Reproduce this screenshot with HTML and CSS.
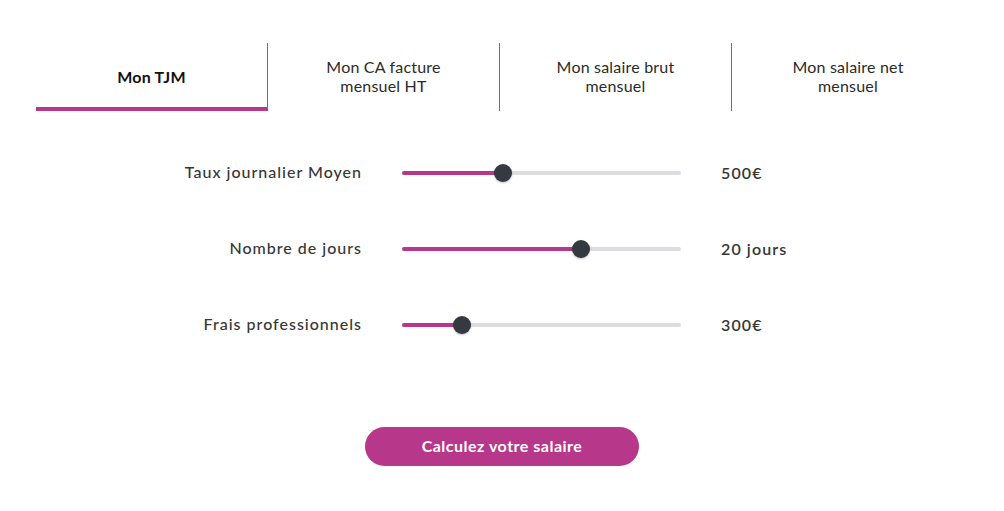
FILE: index.html
```html
<!DOCTYPE html>
<html lang="fr">
<head>
<meta charset="utf-8">
<title>Simulateur</title>
<link rel="stylesheet" href="styles.css">
</head>
<body>
<div class="page">
  <nav class="tabs">
    <div class="tab active">Mon TJM</div>
    <div class="tab">Mon CA facture<br>mensuel HT</div>
    <div class="tab">Mon salaire brut<br>mensuel</div>
    <div class="tab">Mon salaire net<br>mensuel</div>
  </nav>
  <section class="rows">
    <div class="row">
      <div class="label">Taux journalier Moyen</div>
      <div class="slider">
        <div class="track"></div>
        <div class="fill" style="width:36.2%"></div>
        <div class="thumb" style="left:36.2%"></div>
      </div>
      <div class="value">500€</div>
    </div>
    <div class="row">
      <div class="label">Nombre de jours</div>
      <div class="slider">
        <div class="track"></div>
        <div class="fill" style="width:64.2%"></div>
        <div class="thumb" style="left:64.2%"></div>
      </div>
      <div class="value">20 jours</div>
    </div>
    <div class="row">
      <div class="label">Frais professionnels</div>
      <div class="slider">
        <div class="track"></div>
        <div class="fill" style="width:21.5%"></div>
        <div class="thumb" style="left:21.5%"></div>
      </div>
      <div class="value">300€</div>
    </div>
  </section>
  <div class="actions">
    <button class="btn" type="button">Calculez votre salaire</button>
  </div>
</div>
</body>
</html>
```
FILE: styles.css
```css
* { box-sizing: border-box; }
html, body { margin: 0; padding: 0; background: #fff; }
body {
  font-family: Lato, "Open Sans", "Liberation Sans", sans-serif;
  color: #343a40;
}
.page {
  width: 1004px;
  height: 511px;
  padding-top: 43px;
}
.tabs {
  display: flex;
  padding-left: 36px;
}
.tab {
  width: 232px;
  height: 68px;
  display: flex;
  align-items: center;
  justify-content: center;
  text-align: center;
  font-size: 16px;
  line-height: 19px;
  color: #2b2b2b;
  border-right: 1px solid #6c757d;
  letter-spacing: 0.2px;
  padding-bottom: 2px;
}
.tab:last-child { border-right: none; }
.tab.active {
  font-weight: 700;
  color: #111;
  border-bottom: 4px solid #b7388b;
  padding-top: 3px;
  padding-bottom: 0;
}
.rows {
  margin-top: 24px;
  display: flex;
  flex-direction: column;
}
.row {
  height: 76px;
  display: grid;
  grid-template-columns: 362px 279px auto;
  column-gap: 40px;
  align-items: center;
}
.label {
  text-align: right;
  font-size: 16px;
  font-weight: 500;
  color: #363636;
  letter-spacing: 1px;
  padding-bottom: 3px;
}
.value {
  font-size: 16px;
  font-weight: 600;
  color: #363636;
  letter-spacing: 1.1px;
  padding-bottom: 2px;
}
.slider {
  position: relative;
  height: 18px;
}
.track, .fill {
  position: absolute;
  left: 0;
  top: 7px;
  height: 4px;
  border-radius: 2px;
}
.track { width: 100%; background: #dcdde1; }
.fill { background: #b7388b; }
.thumb {
  position: absolute;
  top: 0;
  width: 18px;
  height: 18px;
  margin-left: -9px;
  border-radius: 50%;
  background: #343a40;
  box-shadow: 0 1px 2px rgba(0,0,0,0.25);
}
.actions {
  margin-top: 64px;
  display: flex;
  justify-content: center;
}
.btn {
  width: 274px;
  height: 39px;
  border: none;
  border-radius: 20px;
  background: #b7388b;
  color: #fff;
  font-family: inherit;
  font-size: 16px;
  font-weight: 700;
  letter-spacing: 0.5px;
  padding: 0 0 2px;
}
```
